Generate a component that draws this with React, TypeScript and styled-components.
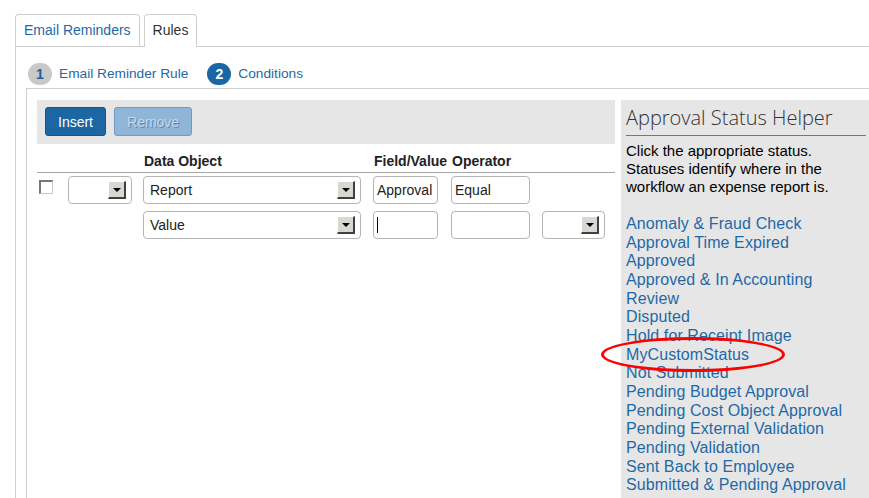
import React from "react";
import styled, { createGlobalStyle } from "styled-components";

const Global = createGlobalStyle`
  html, body { margin: 0; padding: 0; background: #fff; overflow: hidden; }
  body { font-family: Arial, "Liberation Sans", sans-serif; color: #000; }
`;

const Page = styled.div`
  width: 869px;
  height: 498px;
  padding: 14px 0 0 15px;
  box-sizing: border-box;
  position: relative;
  overflow: hidden;
`;

const TabBar = styled.div`
  display: flex;
  gap: 4px;
  border-bottom: 1px solid #cfcfcf;
  height: 32px;
`;

const Tab = styled.div<{ $active?: boolean }>`
  height: 32px;
  box-sizing: border-box;
  padding: 0 8px 2px;
  display: flex;
  align-items: center;
  border: 1px solid #cfcfcf;
  border-bottom: none;
  border-radius: 4px 4px 0 0;
  font-size: 14px;
  color: ${(p) => (p.$active ? "#333" : "#1f69a6")};
  background: #fff;
  ${(p) => p.$active && "height: 33px; margin-bottom: -1px; padding-bottom: 3px;"}
`;

const TabPanel = styled.div`
  border-left: 1px solid #cfcfcf;
  padding: 15px 0 0 10px;
  height: 480px;
  box-sizing: border-box;
`;

const Steps = styled.div`
  display: flex;
  align-items: center;
  gap: 19px;
  padding-left: 2px;
  height: 23px;
`;

const Step = styled.div`
  display: flex;
  align-items: center;
  gap: 7px;
  font-size: 13.7px;
  color: #1f69a6;
`;

const StepNum = styled.span<{ $active?: boolean }>`
  width: 24px;
  height: 22px;
  border-radius: 11px;
  display: inline-flex;
  align-items: center;
  justify-content: center;
  font-weight: bold;
  font-size: 14px;
  background: ${(p) => (p.$active ? "#1a67a3" : "#c9c9c9")};
  color: ${(p) => (p.$active ? "#fff" : "#1f5f94")};
`;

const Box = styled.div`
  margin-top: 3px;
  border-top: 1px solid #cfcfcf;
  border-left: 1px solid #cfcfcf;
  padding: 11px 0 0 10px;
  display: flex;
  gap: 6px;
  height: 420px;
`;

const LeftCol = styled.div`
  width: 578px;
  flex: none;
`;

const Toolbar = styled.div`
  background: #e6e6e6;
  height: 44px;
  padding: 7px 8px;
  box-sizing: border-box;
  display: flex;
  gap: 8px;
`;

const Button = styled.button<{ $disabled?: boolean }>`
  height: 29px;
  padding: 0 12px;
  border-radius: 3px;
  font-family: Arial, "Liberation Sans", sans-serif;
  font-size: 14px;
  border: 1px solid ${(p) => (p.$disabled ? "#6f9cc6" : "#15558a")};
  background: ${(p) => (p.$disabled ? "#8fb5d7" : "#1c66a3")};
  color: ${(p) => (p.$disabled ? "#c9d8e6" : "#fff")};
  text-shadow: ${(p) => (p.$disabled ? "1px 1px 0 #5f87ad" : "none")};
`;

const Grid = styled.div`
  display: grid;
  grid-template-columns: 31px 75px 230px 78px 91px 63px;
  align-items: center;
`;

const HeadRow = styled(Grid)`
  height: 29px;
  border-bottom: 1px solid #a5a5a5;
  align-items: end;
  padding-bottom: 3px;
  box-sizing: border-box;
`;

const Head = styled.div`
  font-weight: bold;
  font-size: 14px;
  color: #222;
  padding-left: 1px;
  white-space: nowrap;
`;

const Row = styled(Grid)<{ $top: number }>`
  margin-top: ${(p) => p.$top}px;
  height: 28px;
`;

const Check = styled.span`
  width: 14px;
  height: 14px;
  margin-left: 2px;
  margin-top: -6px;
  box-sizing: border-box;
  border: 1px solid #c9c9c9;
  border-top: 2px solid #777;
  border-left: 2px solid #777;
  background: #fff;
`;

const Select = styled.div<{ $w: number }>`
  width: ${(p) => p.$w}px;
  height: 28px;
  box-sizing: border-box;
  border: 1px solid #b5b5b5;
  border-radius: 4px;
  display: flex;
  align-items: center;
  justify-content: space-between;
  padding: 0 5px 0 6px;
  font-size: 14px;
  color: #222;
`;

const ArrowBtn = styled.span`
  width: 18px;
  height: 18px;
  box-sizing: border-box;
  background: #d9d7d1;
  border-top: 1px solid #fff;
  border-left: 1px solid #fff;
  border-right: 2px solid #404040;
  border-bottom: 2px solid #404040;
  display: flex;
  align-items: center;
  justify-content: center;
  &::after {
    content: "";
    border-left: 4px solid transparent;
    border-right: 4px solid transparent;
    border-top: 4px solid #000;
  }
`;

const Input = styled.div<{ $w: number }>`
  width: ${(p) => p.$w}px;
  height: 28px;
  box-sizing: border-box;
  border: 1px solid #b5b5b5;
  border-radius: 4px;
  display: flex;
  align-items: center;
  padding: 0 3px;
  font-size: 14px;
  color: #222;
`;

const Caret = styled.span`
  width: 1px;
  height: 16px;
  background: #000;
`;

const Helper = styled.div`
  flex: 1;
  background: #e6e6e6;
  padding: 4px 3px 0 5px;
  margin-bottom: -100px;
`;

const HelperTitle = styled.div`
  font-family: "Open Sans", sans-serif;
  font-weight: 300;
  font-size: 20px;
  color: #333;
  padding-bottom: 4px;
  border-bottom: 1px solid #777;
`;

const HelperText = styled.p`
  margin: 6px 0 0;
  font-size: 15px;
  line-height: 18px;
  color: #000;
`;

const LinkList = styled.div`
  margin-top: 19px;
  display: flex;
  flex-direction: column;
`;

const StatusLink = styled.a`
  font-size: 16px;
  line-height: 18.65px;
  letter-spacing: 0.1px;
  color: #1f69a6;
  text-decoration: none;
  white-space: nowrap;
`;

const Highlight = styled.div`
  position: absolute;
  left: 601px;
  top: 337px;
  width: 184px;
  height: 35px;
  border: 3px solid #f00;
  border-radius: 50%;
  box-sizing: border-box;
  pointer-events: none;
`;

const statuses = [
  "Anomaly & Fraud Check",
  "Approval Time Expired",
  "Approved",
  "Approved & In Accounting",
  "Review",
  "Disputed",
  "Hold for Receipt Image",
  "MyCustomStatus",
  "Not Submitted",
  "Pending Budget Approval",
  "Pending Cost Object Approval",
  "Pending External Validation",
  "Pending Validation",
  "Sent Back to Employee",
  "Submitted & Pending Approval",
];

export default function App() {
  return (
    <>
      <Global />
      <Page>
        <TabBar>
          <Tab>Email Reminders</Tab>
          <Tab $active>Rules</Tab>
        </TabBar>
        <TabPanel>
          <Steps>
            <Step>
              <StepNum>1</StepNum>Email Reminder Rule
            </Step>
            <Step>
              <StepNum $active>2</StepNum>Conditions
            </Step>
          </Steps>
          <Box>
            <LeftCol>
              <Toolbar>
                <Button>Insert</Button>
                <Button $disabled>Remove</Button>
              </Toolbar>
              <HeadRow>
                <span />
                <span />
                <Head>Data Object</Head>
                <Head>Field/Value</Head>
                <Head>Operator</Head>
                <span />
              </HeadRow>
              <Row $top={3}>
                <Check />
                <Select $w={64}>
                  <span />
                  <ArrowBtn />
                </Select>
                <Select $w={218}>
                  <span>Report</span>
                  <ArrowBtn />
                </Select>
                <Input $w={65}>Approval</Input>
                <Input $w={79}>Equal</Input>
                <span />
              </Row>
              <Row $top={7}>
                <span />
                <span />
                <Select $w={218}>
                  <span>Value</span>
                  <ArrowBtn />
                </Select>
                <Input $w={65}>
                  <Caret />
                </Input>
                <Input $w={79} />
                <Select $w={63}>
                  <span />
                  <ArrowBtn />
                </Select>
              </Row>
            </LeftCol>
            <Helper>
              <HelperTitle>Approval Status Helper</HelperTitle>
              <HelperText>
                Click the appropriate status.
                <br />
                Statuses identify where in the
                <br />
                workflow an expense report is.
              </HelperText>
              <LinkList>
                {statuses.map((s) => (
                  <StatusLink key={s} href="#">
                    {s}
                  </StatusLink>
                ))}
              </LinkList>
            </Helper>
          </Box>
        </TabPanel>
        <Highlight />
      </Page>
    </>
  );
}
